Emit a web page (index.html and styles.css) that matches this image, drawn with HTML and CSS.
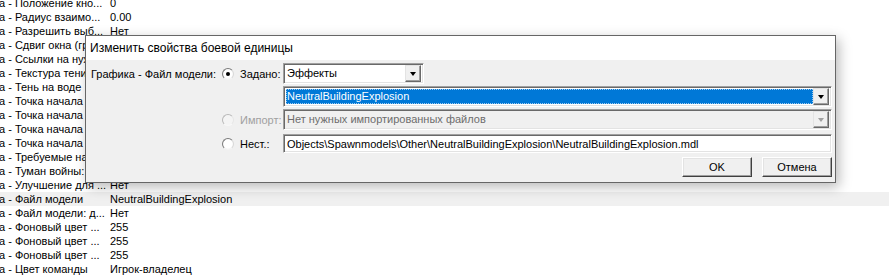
FILE: index.html
```html
<!DOCTYPE html>
<html lang="ru">
<head>
  <meta charset="UTF-8" />
  <title>Изменить свойства боевой единицы</title>
  <link rel="stylesheet" href="styles.css">
</head>
<body>

  <!-- Список свойств за диалогом -->
  <div class="props">
    <div class="row"><span class="name">а - Положение кно...</span><span class="val">0</span></div>
    <div class="row"><span class="name">а - Радиус взаимо...</span><span class="val">0.00</span></div>
    <div class="row"><span class="name">а - Разрешить выб...</span><span class="val">Нет</span></div>
    <div class="row"><span class="name">а - Сдвиг окна (гр...</span><span class="val"></span></div>
    <div class="row"><span class="name">а - Ссылки на нуж...</span><span class="val"></span></div>
    <div class="row"><span class="name">а - Текстура тени</span><span class="val"></span></div>
    <div class="row"><span class="name">а - Тень на воде</span><span class="val"></span></div>
    <div class="row"><span class="name">а - Точка начала а...</span><span class="val"></span></div>
    <div class="row"><span class="name">а - Точка начала а...</span><span class="val"></span></div>
    <div class="row"><span class="name">а - Точка начала а...</span><span class="val"></span></div>
    <div class="row"><span class="name">а - Точка начала а...</span><span class="val"></span></div>
    <div class="row"><span class="name">а - Требуемые на...</span><span class="val"></span></div>
    <div class="row"><span class="name">а - Туман войны: ...</span><span class="val"></span></div>
    <div class="row"><span class="name">а - Улучшение для ...</span><span class="val">Нет</span></div>
    <div class="row selected"><span class="name">а - Файл модели</span><span class="val">NeutralBuildingExplosion</span></div>
    <div class="row"><span class="name">а - Файл модели: д...</span><span class="val">Нет</span></div>
    <div class="row"><span class="name">а - Фоновый цвет ...</span><span class="val">255</span></div>
    <div class="row"><span class="name">а - Фоновый цвет ...</span><span class="val">255</span></div>
    <div class="row"><span class="name">а - Фоновый цвет ...</span><span class="val">255</span></div>
    <div class="row"><span class="name">а - Цвет команды</span><span class="val">Игрок-владелец</span></div>
  </div>

  <!-- Диалог -->
  <div class="dialog">
    <div class="titlebar">Изменить свойства боевой единицы</div>
    <div class="dlg-body">

      <div class="line">
        <span class="label">Графика - Файл модели:</span>
        <span class="radio on"></span>
        <span class="caption">Задано:</span>
        <div class="ctl">
          <div class="combo short">
            <span class="field">Эффекты</span>
            <span class="drop"></span>
          </div>
        </div>
      </div>

      <div class="line">
        <span class="label"></span>
        <span></span>
        <span></span>
        <div class="ctl">
          <div class="combo">
            <span class="field chosen">NeutralBuildingExplosion</span>
            <span class="drop"></span>
          </div>
        </div>
      </div>

      <div class="line">
        <span class="label"></span>
        <span class="radio off"></span>
        <span class="caption grey">Импорт:</span>
        <div class="ctl">
          <div class="combo disabled">
            <span class="field">Нет нужных импортированных файлов</span>
            <span class="drop"></span>
          </div>
        </div>
      </div>

      <div class="line path">
        <span class="label"></span>
        <span class="radio"></span>
        <span class="caption">Нест.:</span>
        <div class="ctl">
          <div class="edit">Objects\Spawnmodels\Other\NeutralBuildingExplosion\NeutralBuildingExplosion.mdl</div>
        </div>
      </div>

      <div class="buttons">
        <button class="btn">OK</button>
        <button class="btn">Отмена</button>
      </div>

    </div>
  </div>

</body>
</html>
```

FILE: styles.css
```css
body {
  margin: 0;
  padding: 0;
  font-family: "Liberation Sans", Arial, sans-serif;
  font-size: 11px;
  background: #ffffff;
  color: #000;
  height: 275px;
  overflow: hidden;
  position: relative;
}

/* Список свойств */
.props {
  margin-top: -4px;
}

.row {
  display: flex;
  height: 14px;
  line-height: 14px;
  white-space: nowrap;
}

.row.selected {
  background: #f0f0f0;
}

.row .name {
  width: 111px;
  margin-left: -1px;
  overflow: hidden;
}

/* Диалог */
.dialog {
  position: absolute;
  left: 85px;
  top: 35px;
  width: 751px;
  height: 148px;
  box-sizing: border-box;
  border: 1px solid #666;
  background: #f0f0f0;
  box-shadow: 3px 4px 12px rgba(0, 0, 0, 0.28);
}

.titlebar {
  height: 24px;
  line-height: 24px;
  background: #fff;
  padding-left: 4px;
  font-size: 12px;
}

.dlg-body {
  padding: 3px 3px 0 5px;
}

.line {
  display: grid;
  grid-template-columns: 131px 18px 43px 1fr;
  align-items: center;
  height: 21px;
  margin-bottom: 2px;
}

.line.path {
  height: 19px;
  margin-top: 4px;
  margin-bottom: 0;
}

.label {
  white-space: nowrap;
}

.caption {
  white-space: nowrap;
  margin-left: 0;
}

.caption.grey {
  color: #a0a0a0;
}

.ctl {
  position: relative;
  z-index: 1;
  height: 100%;
}

/* Радиокнопки */
.radio {
  width: 12px;
  height: 12px;
  box-sizing: border-box;
  border-radius: 50%;
  border: 1px solid;
  border-color: #7a7a7a #d8d8d8 #f4f4f4 #7a7a7a;
  background: radial-gradient(circle at 50% 50%, #fff 55%, #e8e8e8 100%);
  position: relative;
  margin-top: 1px;
}

.radio.on::after {
  content: "";
  position: absolute;
  left: 3px;
  top: 3px;
  width: 4px;
  height: 4px;
  border-radius: 50%;
  background: #000;
}

.radio.off {
  border-color: #b8b8b8 #e6e6e6 #f8f8f8 #b8b8b8;
  background: #f4f4f4;
}

/* Комбобоксы */
.combo {
  display: flex;
  height: 21px;
  box-sizing: border-box;
  border: 1px solid;
  border-color: #a0a0a0 #fff #fff #a0a0a0;
  box-shadow: inset 1px 1px #696969, inset -1px -1px #e3e3e3;
  background: #fff;
  padding: 2px 2px 2px 2px;
}

.combo.short {
  width: 141px;
}

.combo.disabled {
  background: #f0f0f0;
  color: #6d6d6d;
}

.field {
  flex: 1;
  line-height: 15px;
  padding-left: 1px;
  white-space: nowrap;
  overflow: hidden;
}

.field.chosen {
  background: #0078d7;
  color: #fff;
  outline: 1px dotted #9ccaf0;
  outline-offset: -1px;
}

.drop {
  width: 16px;
  box-sizing: border-box;
  border: 1px solid;
  border-color: #e3e3e3 #696969 #696969 #e3e3e3;
  box-shadow: inset -1px -1px #a0a0a0;
  background: #f0f0f0;
  position: relative;
  margin-top: -1px;
  margin-bottom: -1px;
}

.drop::after {
  content: "";
  position: absolute;
  left: 4px;
  top: 6px;
  border-left: 3.5px solid transparent;
  border-right: 3.5px solid transparent;
  border-top: 4px solid #000;
}

.combo.disabled .drop::after {
  border-top-color: #a0a0a0;
}

/* Поле пути */
.edit {
  height: 19px;
  line-height: 15px;
  box-sizing: border-box;
  border: 1px solid;
  border-color: #a0a0a0 #fff #fff #a0a0a0;
  box-shadow: inset 1px 1px #696969, inset -1px -1px #e3e3e3;
  background: #fff;
  padding: 2px 0 0 3px;
  white-space: nowrap;
  overflow: hidden;
}

/* Кнопки */
.buttons {
  display: flex;
  justify-content: flex-end;
  gap: 10px;
  margin-top: 4px;
}

.btn {
  width: 70px;
  height: 20px;
  font-family: "Liberation Sans", Arial, sans-serif;
  font-size: 11px;
  background: #f0f0f0;
  color: #000;
  border: 1px solid;
  border-color: #fff #404040 #404040 #fff;
  box-shadow: inset -1px -1px #a0a0a0, inset 1px 1px #e3e3e3;
  padding: 0;
  cursor: pointer;
}
```
